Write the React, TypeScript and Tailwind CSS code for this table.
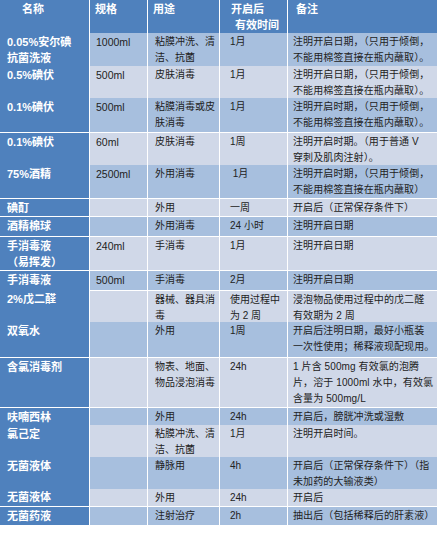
import React from 'react';

type Row = {
  name: string[];
  spec?: string;
  use: string[];
  time: string[];
  note: string[];
  h: string;
  // 名称列与上一行合并显示（不画白线）
  joined?: boolean;
};

const rows: Row[] = [
  {
    name: ['0.05%安尔碘', '抗菌洗液'],
    spec: '1000ml',
    use: ['粘膜冲洗、清', '洁、抗菌'],
    time: ['1月'],
    note: ['注明开启日期，（只用于倾倒，', '不能用棉签直接在瓶内蘸取）。'],
    h: 'h-[32px]',
  },
  {
    name: ['0.5%碘伏'],
    spec: '500ml',
    use: ['皮肤消毒'],
    time: ['1月'],
    note: ['注明开启日期，（只用于倾倒，', '不能用棉签直接在瓶内蘸取）。'],
    h: 'h-[31px]',
  },
  {
    name: ['0.1%碘伏'],
    spec: '500ml',
    use: ['粘膜消毒或皮', '肤消毒'],
    time: ['1月'],
    note: ['注明开启时期，（只用于倾倒，', '不能用棉签直接在瓶内蘸取）。'],
    h: 'h-[34px]',
  },
  {
    name: ['0.1%碘伏'],
    spec: '60ml',
    use: ['皮肤消毒'],
    time: ['1周'],
    note: ['注明开启时期。（用于普通 V', '穿刺及肌肉注射）。'],
    h: 'h-[31px]',
  },
  {
    name: ['75%酒精'],
    spec: '2500ml',
    use: ['外用消毒'],
    time: ['\u00a01月'],
    note: ['注明开启时期，（只用于倾倒，', '不能用棉签直接在瓶内蘸取）'],
    h: 'h-[33px]',
  },
  {
    name: ['碘酊'],
    use: ['外用'],
    time: ['一周'],
    note: ['开启后（正常保存条件下）'],
    h: 'h-[17px]',
  },
  {
    name: ['酒精棉球'],
    use: ['外用消毒'],
    time: ['24 小时'],
    note: ['注明开启日期'],
    h: 'h-[19px]',
  },
  {
    name: ['手消毒液', '（易挥发）'],
    spec: '240ml',
    use: ['手消毒'],
    time: ['1月'],
    note: ['注明开启日期'],
    h: 'h-[33px]',
  },
  {
    name: ['手消毒液'],
    spec: '500ml',
    use: ['手消毒'],
    time: ['2月'],
    note: ['注明开启日期'],
    h: 'h-[19px]',
  },
  {
    name: ['2%戊二醛'],
    use: ['器械、器具消', '毒'],
    time: ['使用过程中', '为 2 周'],
    note: ['浸泡物品使用过程中的戊二醛', '有效期为 2 周'],
    h: 'h-[30px]',
    joined: true,
  },
  {
    name: ['双氧水'],
    use: ['外用'],
    time: ['1周'],
    note: ['开启后注明日期，最好小瓶装', '一次性使用；稀释液现配现用。'],
    h: 'h-[35px]',
  },
  {
    name: ['含氯消毒剂'],
    use: ['物表、地面、', '物品浸泡消毒'],
    time: ['24h'],
    note: ['1 片含 500mg 有效氯的泡腾', '片，溶于 1000ml 水中，有效氯', '含量为 500mg/L'],
    h: 'h-[49px]',
  },
  {
    name: ['呋喃西林'],
    use: ['外用'],
    time: ['24h'],
    note: ['开启后，膀胱冲洗或湿敷'],
    h: 'h-[16px]',
  },
  {
    name: ['氯己定'],
    use: ['粘膜冲洗、清', '洁、抗菌'],
    time: ['1月'],
    note: ['注明开启时间。'],
    h: 'h-[31px]',
  },
  {
    name: ['无菌液体'],
    use: ['静脉用'],
    time: ['4h'],
    note: ['开启后（正常保存条件下）（指', '未加药的大输液类）'],
    h: 'h-[31px]',
  },
  {
    name: ['无菌液体'],
    use: ['外用'],
    time: ['24h'],
    note: ['开启后'],
    h: 'h-[17px]',
    joined: true,
  },
  {
    name: ['无菌药液'],
    use: ['注射治疗'],
    time: ['2h'],
    note: ['抽出后（包括稀释后的肝素液）'],
    h: 'h-[18px]',
  },
];

const FONT = "font-['Liberation_Sans','Noto_Sans_CJK_SC',sans-serif]";

function Lines({ lines }: { lines: string[] }) {
  return (
    <>
      {lines.map((l, i) => (
        <div key={i} className="whitespace-nowrap">
          {l}
        </div>
      ))}
    </>
  );
}

export default function App() {
  return (
    <div className={`w-[438px] h-[543px] bg-white ${FONT}`}>
      <div className="w-[437px] flex flex-col gap-y-px bg-white">
        {/* 表头 */}
        <div className="grid grid-cols-[89px_57px_71px_67px_149px] gap-x-px h-[32px] text-[11px] leading-[16px] font-bold text-white">
          <div className="bg-[#4f81bd] pl-[22px] pt-[1px]">名称</div>
          <div className="bg-[#4f81bd] pl-[5px] pt-[1px]">规格</div>
          <div className="bg-[#4f81bd] pl-[5px] pt-[1px]">用途</div>
          <div className="bg-[#4f81bd] pl-[11px] pt-[1px]">
            <div>开启后</div>
            <div className="pl-[4px]">有效时间</div>
          </div>
          <div className="bg-[#4f81bd] pl-[8px] pt-[1px]">备注</div>
        </div>

        {rows.map((r, i) => {
          const band = i % 2 === 0 ? 'bg-[#a7bfde]' : 'bg-[#d0d8e8]';
          return (
            <div
              key={i}
              className={`grid grid-cols-[89px_57px_71px_67px_149px] gap-x-px ${r.h} text-[10px] leading-[16px] text-[#222]`}
            >
              <div
                className={`bg-[#4f81bd] pl-[7px] pt-[1px] text-[11px] font-bold text-white ${
                  r.joined ? '-mt-px' : ''
                }`}
              >
                <Lines lines={r.name} />
              </div>
              <div className={`${band} pl-[6px] pt-[1px] text-[10.5px]`}>{r.spec}</div>
              <div className={`${band} pl-[7px] pt-[1px]`}>
                <Lines lines={r.use} />
              </div>
              <div className={`${band} pl-[10px] pt-[1px]`}>
                <Lines lines={r.time} />
              </div>
              <div className={`${band} pl-[5px] pt-[1px] tracking-[0.1px]`}>
                <Lines lines={r.note} />
              </div>
            </div>
          );
        })}
      </div>
    </div>
  );
}
